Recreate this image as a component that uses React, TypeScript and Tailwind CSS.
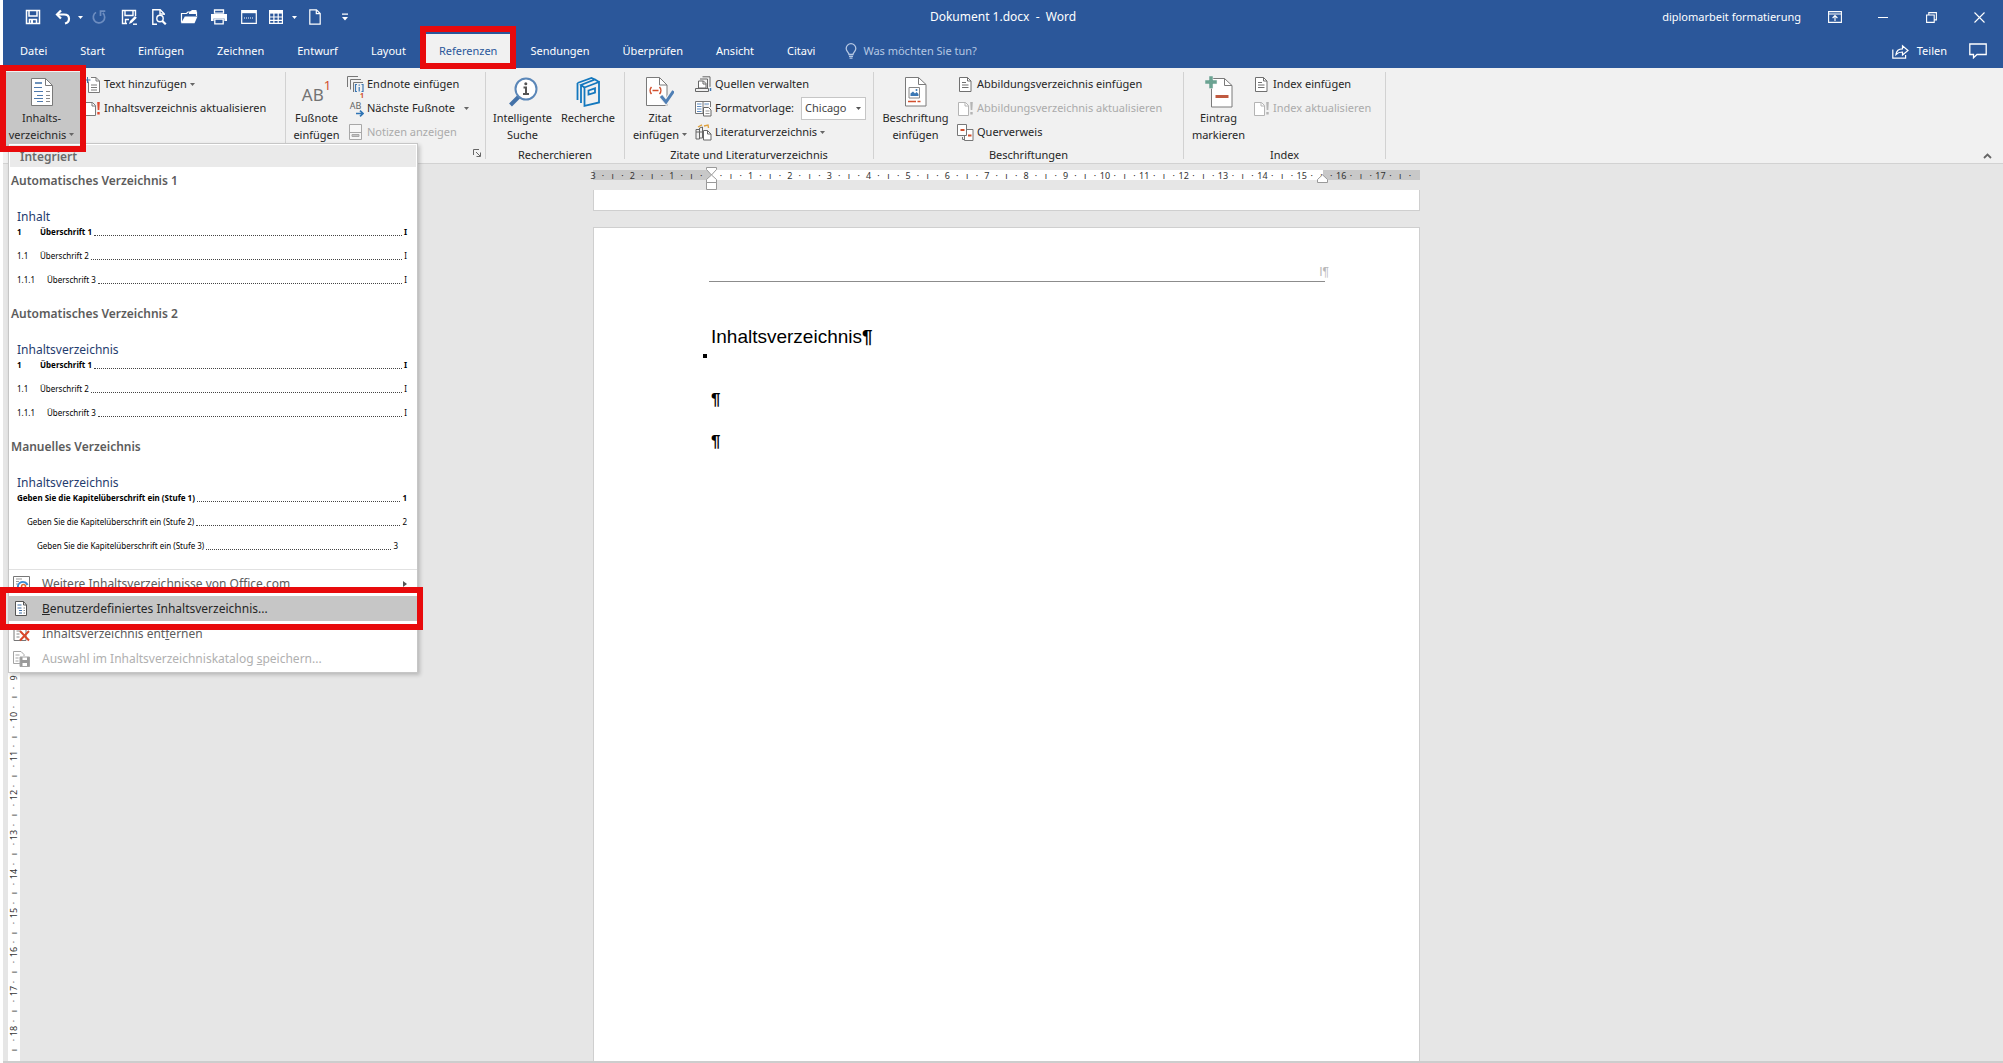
import { ReactNode } from "react";
import clsx from "clsx";

type IconProps = { className?: string };

/* ---------- title bar icons ---------- */

const SaveIcon = ({ className = "size-4" }: IconProps) => (
  <svg viewBox="0 0 16 16" className={className} fill="none" stroke="currentColor" strokeWidth="1.5">
    <path d="M1.5 1.5h13v13h-13z" />
    <path d="M4 2v5h8V2" />
    <path d="M4.5 14v-3.5h7V14" />
    <path d="M6 11h2v3H6z" fill="currentColor" stroke="none" />
  </svg>
);

const UndoIcon = () => (
  <svg viewBox="0 0 16 16" className="size-4" fill="none" stroke="currentColor" strokeWidth="2.2">
    <path d="M6 1.5 2 5.5l4 4" />
    <path d="M2.5 5.5h6.5c3 0 5 1.6 5 4.2S12 14 10 14.5" />
  </svg>
);

const RedoIcon = () => (
  <svg viewBox="0 0 16 16" className="size-4" fill="none" stroke="currentColor" strokeWidth="1.7">
    <path d="M5 3.4A5.7 5.7 0 1 0 11.8 4" />
    <path d="M9.5 7V2.2h4.8" />
  </svg>
);

const SaveAsIcon = () => (
  <svg viewBox="0 0 16 16" className="size-4" fill="none" stroke="currentColor" strokeWidth="1.4">
    <path d="M6 14.5H1.5v-13h13V7" />
    <path d="M4 2v4.5h8V2" />
    <path d="M4.5 14v-3.5H8" />
    <path d="m8 15 1-3 5-5 1.8 1.8-5 5z" fill="currentColor" stroke="none" />
    <path d="M12 15.2h4" />
  </svg>
);

const PreviewIcon = () => (
  <svg viewBox="0 0 16 16" className="size-4" fill="none" stroke="currentColor" strokeWidth="1.4">
    <path d="M6 15.2H1.8V.8h7.4l4 4V6" />
    <path d="M9 1v4h4" />
    <circle cx="9" cy="9.5" r="3.2" />
    <path d="m11.3 12 3.5 3.3" strokeWidth="2.2" />
  </svg>
);

const OpenIcon = () => (
  <svg viewBox="0 0 18 16" className="h-4 w-[18px]" fill="currentColor">
    <path d="M1.500 13.500v-9h5L8 3h8.500v4" fill="none" stroke="currentColor" strokeWidth="1.200" />
    <path d="M9 3.500 12 1h4.500v4H9z" />
    <path d="M1 14.200 4.800 7.500H17.500l-3 6.700z" />
  </svg>
);

const PrintIcon = () => (
  <svg viewBox="0 0 18 16" className="h-4 w-[18px]" fill="currentColor">
    <path d="M4.5 1h9v3.2h-9z" fill="none" stroke="currentColor" strokeWidth="1.3" />
    <path d="M1 5h16v7h-2.6V9.5H3.6V12H1z" />
    <path d="M4.8 10.2h8.4v4.6H4.8z" fill="none" stroke="currentColor" strokeWidth="1.3" />
  </svg>
);

const BreakIcon = () => (
  <svg viewBox="0 0 16 14" className="h-3.5 w-4" fill="none" stroke="currentColor">
    <path d="M.7.7h14.6v12.6H.7z" strokeWidth="1.2" />
    <path d="M1 2h14" strokeWidth="2.4" />
    <path d="M3 8h10" strokeDasharray="1 1" strokeWidth="1.2" />
  </svg>
);

const TableIcon = () => (
  <svg viewBox="0 0 14 14" className="size-3.5" fill="none" stroke="currentColor" strokeWidth="1.2">
    <path d="M.6.6h12.8v12.8H.6zM.6 7h12.8M.6 10.3h12.8M4.9 3v10.5M9.2 3v10.5" />
    <path d="M.6 2.1h12.8" strokeWidth="3" />
  </svg>
);

const BlankPageIcon = () => (
  <svg viewBox="0 0 12 16" className="h-4 w-3" fill="none" stroke="currentColor" strokeWidth="1.2">
    <path d="M.8.8h6.7l3.7 3.7v10.7H.8z" />
    <path d="M7.3 1v3.7H11" />
  </svg>
);

const Caret = ({ className = "" }: IconProps) => (
  <svg viewBox="0 0 5 3" className={clsx("inline-block h-[3px] w-[5px] shrink-0", className)} fill="currentColor">
    <path d="M0 0h5L2.5 3z" />
  </svg>
);

const CustomizeIcon = () => (
  <svg viewBox="0 0 6 8" className="h-2 w-1.5" fill="currentColor">
    <path d="M0 .5h6v1.2H0zM0 4h6L3 7.5z" />
  </svg>
);

const RibbonModeIcon = () => (
  <svg viewBox="0 0 14 12" className="h-3 w-3.5" fill="none" stroke="currentColor" strokeWidth="1.1">
    <path d="M.6.6h12.8v10.8H.6zM.6 3h12.8M7 10V4.8M4.6 7 7 4.6 9.4 7" />
  </svg>
);

const MinimizeIcon = () => (
  <svg viewBox="0 0 10 10" className="size-2.5" stroke="currentColor">
    <path d="M0 5.5h10" />
  </svg>
);

const RestoreIcon = () => (
  <svg viewBox="0 0 11 11" className="size-[11px]" fill="none" stroke="currentColor" strokeWidth="1.1">
    <path d="M.6 3h7.6v7.4H.6zM2.8 3V.6h7.6v7.3H8.2" />
  </svg>
);

const CloseIcon = () => (
  <svg viewBox="0 0 11 11" className="size-[11px]" stroke="currentColor" strokeWidth="1.1">
    <path d="m.5.5 10 10M10.5.5l-10 10" />
  </svg>
);

const BulbIcon = () => (
  <svg viewBox="0 0 12 16" className="h-4 w-3" fill="none" stroke="currentColor" strokeWidth="1.3">
    <path d="M4 11.5c0-2-2.8-3-2.8-6a4.8 4.8 0 0 1 9.6 0c0 3-2.8 4-2.8 6z" />
    <path d="M4 13.3h4M4.5 15.2h3" />
  </svg>
);

const ShareIcon = () => (
  <svg viewBox="0 0 17 15" className="h-[15px] w-[17px]" fill="none" stroke="currentColor" strokeWidth="1.2">
    <path d="M.8 5.5v8.7h12.8V11" />
    <path d="M4 10.5c.4-3.6 2.6-5.5 6.5-5.6V1.8l5.5 4.7-5.5 4.5V8C7.6 8 5.6 8.8 4 10.5z" />
  </svg>
);

const CommentIcon = () => (
  <svg viewBox="0 0 18 16" className="h-4 w-[18px]" fill="none" stroke="currentColor" strokeWidth="1.3">
    <path d="M.8 1h16.4v10.5H8l-3.5 3.3v-3.3H.8z" />
  </svg>
);

/* ---------- ribbon icons ---------- */

const TocIcon = () => (
  <svg viewBox="0 0 22 28" className="h-7 w-[22px]" fill="none">
    <path d="M.5.5h14l7 7v20H.5z" fill="#fff" stroke="#7a7a7a" />
    <path d="M14.5.5v7h7" stroke="#7a7a7a" />
    <path d="M4 5h7" stroke="#3c6ea5" strokeWidth="1.5" />
    <path d="M3 9.5h8M3 13.5h9M6 17.5h6M3 20.5h9M6 23.5h6" stroke="#4d79ad" />
    <path d="M15 13.5h4M15 17.5h4M15 20.5h4M15 23.5h4" stroke="#888" />
  </svg>
);

const AddTextIcon = () => (
  <svg viewBox="0 0 17 17" className="size-[17px]" fill="none" stroke="#7a7a7a">
    <path d="M4.5 5.5v11h11V5l-3.5-3.5H7" fill="#fff" />
    <path d="M12 1.5V5h3.5M7 9h6M7 11.500h6M7 14h6" />
    <path d="M.5 4h6M3.5 1v6" stroke="#3c6ea5" />
  </svg>
);

const UpdateIcon = ({ color = "#e0492f", stroke = "#7a7a7a" }: { color?: string; stroke?: string }) => (
  <svg viewBox="0 0 17 17" className="size-[17px]" fill="none">
    <path d="M1.5 2.5h7l3 3v10h-10z" fill="#fff" stroke={stroke} />
    <path d="M8 2.5V6h3.5" stroke={stroke} />
    <path d="M13.200 2h2.600l-.5 8h-1.600zM13.300 12h2.400v2.500h-2.400z" fill={color} />
  </svg>
);

const EndnoteIcon = () => (
  <svg viewBox="0 0 17 17" className="size-[17px]" fill="none" stroke="#777">
    <path d="M.5 11V.5H11M3.5 13.5v-10H14M6.5 16V6.5H16" />
    <path d="M10 8.5H8.5v7H10M14.5 8.5H16v7h-1.5M12.200 8.5v1.200M12.200 11v4.5" stroke="#3c78b4" strokeWidth="1.2" />
  </svg>
);

const NextNoteIcon = () => (
  <span aria-hidden="true" className="relative block h-[17px] w-[17px] text-[9px] leading-3 text-[#666]">
    AB
    <sup className="absolute -top-1 right-0 text-[7px] font-bold text-[#d2502e]">1</sup>
    <svg viewBox="0 0 8 7" className="absolute right-0 bottom-0 h-[7px] w-2" fill="none" stroke="#2f74b5" strokeWidth="1.6">
      <path d="M0 3.5h7M4 .6l3 2.900-3 2.900" />
    </svg>
  </span>
);

const NotesIcon = () => (
  <svg viewBox="0 0 17 17" className="size-[17px]" fill="none" stroke="#a8a8a8">
    <path d="M2.5.5h12v15h-12zM2.5 8.5h12" fill="#f7f7f7" />
    <path d="M5 10.5h7v2H5z" fill="#c4c4c4" />
  </svg>
);

const SmartLookupIcon = () => (
  <svg viewBox="0 0 30 30" className="size-[30px]" fill="none">
    <path d="M11 19.5 2.500 28" stroke="#4472a8" strokeWidth="4" />
    <circle cx="18" cy="12" r="10.5" fill="#fff" stroke="#5b87b8" strokeWidth="2" />
    <path d="M15.500 10.500H18v6.500M15 17h6" stroke="#555" strokeWidth="2" />
    <circle cx="17.800" cy="6.800" r="1.500" fill="#555" />
  </svg>
);

const ResearchIcon = () => (
  <svg viewBox="0 0 24 30" className="h-[30px] w-6" fill="none" stroke="#1478be" strokeWidth="1.8">
    <path d="M8.500 10.500 23 5v20.500l-14.500 3.300zM12.500 13.500l6.500-2.200v4.200l-6.500 2z" />
    <path d="M8.500 10.500 5 8l14-5.500L23 5M5 8v18M1.500 6v17M1.500 6l14-5 3.500 1.500" />
  </svg>
);

const CitationIcon = () => (
  <svg viewBox="0 0 28 30" className="h-[30px] w-7" fill="none">
    <path d="M.5.5h13l7.5 7.5v20.5H.5z" fill="#fff" stroke="#7a7a7a" />
    <path d="M13.5.5V8H21" stroke="#7a7a7a" />
    <path d="M5.5 10c-1.800 2-1.800 5 0 7M13.5 10c1.800 2 1.800 5 0 7M6.5 13.500h6" stroke="#d2502e" strokeWidth="1.5" />
    <path d="m15 19 5 6 7.500-11" stroke="#f1f1f1" strokeWidth="5" />
    <path d="m15 19 5 6 7.500-11" stroke="#4f7fb5" strokeWidth="3" />
  </svg>
);

const SourcesIcon = () => (
  <svg viewBox="0 0 17 17" className="size-[17px]" fill="none" stroke="#666">
    <path d="M5 3h7.500v9M7.500.8H15v10" />
    <path d="M3.500 12V5h5l2.500 2.500V12z" fill="#fff" />
    <path d="M8 5v3h3M.5 12.500h13v3H.5z" />
    <path d="M15.500 12v3" stroke="#3c78b4" strokeWidth="1.5" />
  </svg>
);

const StyleIcon = () => (
  <svg viewBox="0 0 17 17" className="size-[17px]" fill="none">
    <path d="M.5 1.5H8v12H.5zM8 1.5h7.5V7" stroke="#777" fill="#fff" />
    <path d="M2 4h4.5M2 6.500h4.5M2 9h4.5M2 11.500h4.5M9.500 4H14" stroke="#5e8bc0" />
    <path d="M8.500 7.500h5l2.500 2.500v6H8.500z" stroke="#666" fill="#fff" />
    <path d="M10.500 11h4M10.500 13.500h4" stroke="#999" />
  </svg>
);

const BibliographyIcon = () => (
  <svg viewBox="0 0 17 17" className="size-[17px]" fill="none">
    <path d="M1 5.500h3.500V15H1zM4.500 4l3-1v11h-3zM1 8h6" stroke="#666" />
    <path d="M3 3 7 .8M9 2l4-1 .5 3" stroke="#e0a13c" strokeWidth="1.4" />
    <path d="M8.500 6.500h4l3.500 3.500v6H8.500z" stroke="#666" fill="#fff" />
    <path d="M12.500 6.500V10H16" stroke="#666" />
  </svg>
);

const CaptionIcon = () => (
  <svg viewBox="0 0 22 30" className="h-[30px] w-[22px]" fill="none">
    <path d="M.5.5h13l7.500 7v21.500H.5z" fill="#fff" stroke="#7a7a7a" />
    <path d="M13.500.5v7H21" stroke="#7a7a7a" />
    <path d="M4 10.500h10.500V21H4z" stroke="#888" />
    <path d="M5.500 19v-2.500l2.500-2 2 2 1.500-1.500 2 2v2z" fill="#3c78b4" />
    <circle cx="11.500" cy="13" r="1" fill="#3c78b4" />
    <path d="M3 24.500h8M12.500 24.500h3" stroke="#d2502e" strokeWidth="1.3" />
  </svg>
);

const ListPageIcon = () => (
  <svg viewBox="0 0 17 17" className="size-[17px]" fill="none" stroke="#707070">
    <path d="M2.500 1.500h8l3.500 3.500v10.500H2.500z" fill="#fff" />
    <path d="M10.500 1.500V5H14M5 6.500h4M5 9h6.500M5 11.500h6.500" />
  </svg>
);

const CrossRefIcon = () => (
  <svg viewBox="0 0 17 17" className="size-[17px]" fill="none">
    <path d="M7.500 5.500H16v11H7.500z" fill="#fff" stroke="#777" />
    <path d="M.5.500h9v11h-9z" fill="#fff" stroke="#777" />
    <path d="M3.500 6h4M11 11.500h3.500" stroke="#d2502e" strokeWidth="2" />
    <path d="M5.500 13v2.500H8" stroke="#777" />
  </svg>
);

const MarkEntryIcon = () => (
  <svg viewBox="0 0 28 32" className="h-8 w-7" fill="none">
    <path d="M6.500 2.500h13l7.500 7V31H6.500z" fill="#fff" stroke="#7a7a7a" />
    <path d="M19.500 2.500v7H27" stroke="#7a7a7a" />
    <path d="M0 4h4V0h4v4h4v4H8v4.500H4V8H0z" fill="#6ba392" stroke="#f1f1f1" strokeWidth="0.5" />
    <path d="M10.500 20.500h13" stroke="#c05a40" strokeWidth="3" />
  </svg>
);

const LauncherIcon = () => (
  <svg viewBox="0 0 8 8" className="size-2" fill="none" stroke="#666">
    <path d="M.5 6V.5H6M3 3l4 4M7.5 3.500v4h-4" />
  </svg>
);

/* ---------- menu icons ---------- */

const OfficeComIcon = () => (
  <svg viewBox="0 0 17 17" className="size-[17px]" fill="none">
    <path d="M.5 1.500h16v14H.5z" fill="#fff" stroke="#777" />
    <path d="M3 4h6M3 6.500h3M3 9h2" stroke="#999" />
    <path d="M5 13a5 5 0 0 1 9.500-3" stroke="#3c8ad0" strokeWidth="2" />
    <circle cx="10.500" cy="11.500" r="2" stroke="#e0692f" strokeWidth="1.5" />
  </svg>
);

const CustomTocIcon = () => (
  <svg viewBox="0 0 17 17" className="size-[17px]" fill="none">
    <path d="M2.500 1.500h8l3 3.500v10.500h-11z" fill="#fff" stroke="#555" />
    <path d="M10.500 1.500V5h3" stroke="#555" />
    <path d="M4.500 5h4M4.500 8h4M6 10.500h3M6 13h3" stroke="#3c6ea5" />
    <path d="M10.500 8H12M10.500 10.500H12M10.500 13H12" stroke="#888" />
  </svg>
);

const RemoveTocIcon = () => (
  <svg viewBox="0 0 17 17" className="size-[17px]" fill="none">
    <path d="M1 1.500h9L13 5v10.500H1z" fill="#fff" stroke="#777" />
    <path d="M3.500 6h4M3.500 9h3M3.500 12h3" stroke="#888" />
    <path d="m7 6 9 9.500M16 6l-9 9.500" stroke="#d9482b" strokeWidth="2" />
  </svg>
);

const SaveSelectionIcon = () => (
  <svg viewBox="0 0 17 17" className="size-[17px]" fill="none" stroke="#a5a5a5">
    <path d="M7 13.500H.5v-12H8L11 4.500V6M2.500 5h4M2.500 8h3M2.500 11h3" />
    <path d="M7 7h9.500v9.500H7z" fill="#9a9a9a" />
    <path d="M9.500 7.500h4.500V10H9.500zM9.500 13h4.500v3H9.500z" fill="#fff" stroke="none" />
  </svg>
);

/* ---------- data ---------- */

const tabs = ["Datei", "Start", "Einfügen", "Zeichnen", "Entwurf", "Layout", "Referenzen", "Sendungen", "Überprüfen", "Ansicht", "Citavi"];

const quickButton = "flex h-[34px] w-[30px] items-center justify-center";

const previews = [
  {
    title: "Automatisches Verzeichnis 1",
    heading: "Inhalt",
    rows: [
      { num: "1", text: "Überschrift 1", page: "I" },
      { num: "1.1", text: "Überschrift 2", page: "I" },
      { num: "1.1.1", text: "Überschrift 3", page: "I" },
    ],
  },
  {
    title: "Automatisches Verzeichnis 2",
    heading: "Inhaltsverzeichnis",
    rows: [
      { num: "1", text: "Überschrift 1", page: "I" },
      { num: "1.1", text: "Überschrift 2", page: "I" },
      { num: "1.1.1", text: "Überschrift 3", page: "I" },
    ],
  },
  {
    title: "Manuelles Verzeichnis",
    heading: "Inhaltsverzeichnis",
    rows: [
      { num: "", text: "Geben Sie die Kapitelüberschrift ein (Stufe 1)", page: "1" },
      { num: "", text: "Geben Sie die Kapitelüberschrift ein (Stufe 2)", page: "2" },
      { num: "", text: "Geben Sie die Kapitelüberschrift ein (Stufe 3)", page: "3" },
    ],
  },
];

// four ticks per centimetre: number, dot, half mark, dot
const buildTicks = (from: number, count: number) =>
  Array.from({ length: count }, (_, i) => {
    if (i % 4 === 2) return "ı";
    if (i % 4 !== 0) return "·";
    const cm = Math.abs(from + i / 4);
    return cm === 0 ? "" : String(cm);
  });

const horizontalTicks = buildTicks(-3, 84);
const verticalTicks = buildTicks(9, 39);

/* ---------- building blocks ---------- */

const RedFrame = ({ className }: { className: string }) => (
  <span className={clsx("pointer-events-none absolute z-30 border-[6px] border-[#e80a0c]", className)} />
);

type LargeProps = { icon: ReactNode; lines: string[]; caret?: boolean; className?: string; active?: boolean };

const LargeButton = ({ icon, lines, caret, className, active }: LargeProps) => (
  <button className={clsx("flex h-[76px] shrink-0 flex-col items-center pt-0.5 whitespace-nowrap", active && "bg-[#c6c6c6]", className)}>
    <span className="flex h-[35px] items-center justify-center">{icon}</span>
    {lines.map((line, i) => (
      <span key={line} className="flex items-center gap-[3px] leading-[17px]">
        {line}
        {caret && i === lines.length - 1 && <Caret className="text-[#666]" />}
      </span>
    ))}
  </button>
);

type SmallProps = { icon: ReactNode; text: string; caret?: boolean; wideCaret?: boolean; disabled?: boolean };

const SmallButton = ({ icon, text, caret, wideCaret, disabled }: SmallProps) => (
  <button
    disabled={disabled}
    className={clsx("flex h-6 items-center gap-[3px] whitespace-nowrap", disabled && "text-[#ababab]")}
  >
    {icon}
    {text}
    {caret && <Caret className={clsx("text-[#666]", wideCaret && "ml-1.5")} />}
  </button>
);

type GroupProps = { label: string; className: string; children: ReactNode };

const Group = ({ label, className, children }: GroupProps) => (
  <section className={clsx("relative my-1 flex shrink-0 flex-col border-r border-[#d2d2d2]", className)}>
    <div className="flex">{children}</div>
    <h2 className="text-center leading-[14px]">{label}</h2>
  </section>
);

const TitleBar = () => (
  <div className="grid h-[34px] grid-cols-[1fr_auto_1fr] items-center">
    <div className="flex items-center pl-[15px]">
      <button aria-label="Speichern" className={quickButton}><SaveIcon /></button>
      <button aria-label="Rückgängig" className={quickButton}><UndoIcon /></button>
      <button aria-label="Rückgängig-Liste" className="flex w-1.5"><Caret /></button>
      <button aria-label="Wiederholen" className={clsx(quickButton, "text-[#6d8dc0]")}><RedoIcon /></button>
      <button aria-label="Speichern unter" className={quickButton}><SaveAsIcon /></button>
      <button aria-label="Seitenansicht" className={quickButton}><PreviewIcon /></button>
      <button aria-label="Öffnen" className={quickButton}><OpenIcon /></button>
      <button aria-label="Drucken" className={quickButton}><PrintIcon /></button>
      <button aria-label="Umbruch" className={quickButton}><BreakIcon /></button>
      <button aria-label="Tabelle" className="flex w-6 items-center justify-center"><TableIcon /></button>
      <button aria-label="Tabellen-Liste" className="flex w-3 justify-center"><Caret /></button>
      <button aria-label="Neu" className={quickButton}><BlankPageIcon /></button>
      <button aria-label="Anpassen" className={quickButton}><CustomizeIcon /></button>
    </div>
    <h1 className="text-[12px] whitespace-pre">Dokument 1.docx  -  Word</h1>
    <div className="flex items-center justify-end">
      <span className="mr-2.5">diplomarbeit formatierung</span>
      <button aria-label="Menüband-Anzeige" className="flex h-8 w-12 items-center justify-center"><RibbonModeIcon /></button>
      <button aria-label="Minimieren" className="flex h-8 w-12 items-center justify-center"><MinimizeIcon /></button>
      <button aria-label="Verkleinern" className="flex h-8 w-12 items-center justify-center"><RestoreIcon /></button>
      <button aria-label="Schließen" className="flex h-8 w-12 items-center justify-center"><CloseIcon /></button>
    </div>
  </div>
);

const TabBar = () => (
  <nav className="flex h-[34px] items-center gap-[3px] pl-0.5">
    {tabs.map((tab) => {
      const active = tab === "Referenzen";
      return (
        <button
          key={tab}
          className={clsx("relative h-full px-[15px]", active && "bg-[#f1f1f1] text-[#2b579a]")}
        >
          {tab}
          {active && <RedFrame className="-inset-x-1 -top-2 -bottom-px" />}
        </button>
      );
    })}
    <label className="ml-3 flex items-center gap-1.5 text-[#b5c7e3]">
      <BulbIcon />
      <input
        aria-label="Was möchten Sie tun?"
        placeholder="Was möchten Sie tun?"
        className="w-40 bg-transparent outline-none placeholder:text-[#b5c7e3]"
      />
    </label>
    <div className="ml-auto flex items-center pr-4">
      <button className="mr-[22px] flex items-center gap-2"><ShareIcon />Teilen</button>
      <button aria-label="Kommentare"><CommentIcon /></button>
    </div>
  </nav>
);

type Preview = (typeof previews)[number];

const TocPreview = ({ title, heading, rows }: Preview) => (
  <button className="block h-[133px] w-full text-left">
    <span className="block pt-0.5 pl-0.5 text-[12px] leading-[18px] font-semibold text-[#5c5c5c]">{title}</span>
    <span className="block pt-[18px] pl-2 text-[12px] leading-[18px] text-[#1f3c6e]">{heading}</span>
    {rows.map(({ num, text, page }, i) => (
      <span
        key={text}
        className={clsx(
          "flex h-6 items-start pr-2.5 text-[8px] leading-3 text-black",
          i === 0 && "font-bold",
          !num && i === 1 ? "pl-[18px]" : !num && i === 2 ? "pr-[19px] pl-7" : "pl-2",
        )}
      >
        {num && <span className={i === 2 ? "w-[30px]" : "w-[23px]"}>{num}</span>}
        {text}
        <span className="mx-0.5 mt-[9px] flex-1 border-b border-dotted border-[#444]" />
        {page}
      </span>
    ))}
  </button>
);

const menuItem = "flex h-[25px] w-full items-center gap-3 pl-1 text-left text-[12px] whitespace-nowrap";

const TocMenu = () => (
  <div className="absolute top-[75px] left-[5px] z-20 w-[410px] border border-[#c6c6c6] bg-white pb-px shadow-[2px_2px_4px_rgba(0,0,0,0.2)]">
    <h3 className="m-px mb-0 h-[22px] bg-[#eaeaea] pl-2.5 text-[12px] leading-6 font-semibold text-[#6a6a6a]">Integriert</h3>
    {previews.map((preview) => (
      <TocPreview key={preview.title} {...preview} />
    ))}
    <div className="mt-[3px] border-t border-[#e1e1e1] pt-px text-[#5c5c5c]">
      <button className={clsx(menuItem, "pr-2.5")}>
        <OfficeComIcon />
        <span className="flex-1">Weitere Inhaltsverzeichnisse von Office.com</span>
        <svg viewBox="0 0 4 6" className="h-1.5 w-1" fill="#555"><path d="M0 0v6l4-3z" /></svg>
      </button>
      <div className="relative">
        <button className={clsx(menuItem, "bg-[#c6c6c6] text-[#262626]")}>
          <CustomTocIcon />
          <span><u>B</u>enutzerdefiniertes Inhaltsverzeichnis...</span>
        </button>
        <RedFrame className="-inset-y-[9px] -right-1.5 -left-[9px]" />
      </div>
      <button className={menuItem}>
        <RemoveTocIcon />
        <span>Inhaltsverzeichnis ent<u>f</u>ernen</span>
      </button>
      <button disabled className={clsx(menuItem, "text-[#b0b0b0]")}>
        <SaveSelectionIcon />
        <span>Auswahl im Inhaltsverzeichniskatalog <u>s</u>peichern...</span>
      </button>
    </div>
  </div>
);

const Ribbon = () => (
  <div className="relative z-10 flex h-24 border-b border-[#d2d2d2] bg-[#f1f1f1] text-[#262626]">
    <Group label="" className="w-[283px]">
      <div className="relative">
        <LargeButton active caret icon={<TocIcon />} lines={["Inhalts-", "verzeichnis"]} className="w-[77px]" />
        <RedFrame className="-top-[7px] -right-1.5 -bottom-1 -left-[3px]" />
      </div>
      <div className="ml-1">
        <SmallButton icon={<AddTextIcon />} text="Text hinzufügen" caret />
        <SmallButton icon={<UpdateIcon />} text="Inhaltsverzeichnis aktualisieren" />
      </div>
    </Group>
    <Group label="" className="w-[200px]">
      <LargeButton
        icon={
          <span aria-hidden="true" className="flex items-start pt-1.5 text-[17px] leading-5 text-[#737373]">
            AB<span className="-mt-2 text-[13px] leading-4 text-[#d2502e]">1</span>
          </span>
        }
        lines={["Fußnote", "einfügen"]}
        className="w-[61px]"
      />
      <div>
        <SmallButton icon={<EndnoteIcon />} text="Endnote einfügen" />
        <SmallButton icon={<NextNoteIcon />} text="Nächste Fußnote" caret wideCaret />
        <SmallButton disabled icon={<NotesIcon />} text="Notizen anzeigen" />
      </div>
      <button aria-label="Fußnotenoptionen" className="absolute right-1 bottom-0.5"><LauncherIcon /></button>
    </Group>
    <Group label="Recherchieren" className="w-[139px]">
      <LargeButton icon={<SmartLookupIcon />} lines={["Intelligente", "Suche"]} className="w-[73px]" />
      <LargeButton icon={<ResearchIcon />} lines={["Recherche"]} className="w-[58px]" />
    </Group>
    <Group label="Zitate und Literaturverzeichnis" className="w-[249px]">
      <LargeButton caret icon={<CitationIcon />} lines={["Zitat", "einfügen"]} className="w-[70px]" />
      <div>
        <SmallButton icon={<SourcesIcon />} text="Quellen verwalten" />
        <div className="flex h-6 items-center gap-[3px]">
          <StyleIcon />
          <label htmlFor="style">Formatvorlage:</label>
          <span className="relative ml-1 flex items-center">
            <select
              id="style"
              className="h-[23px] w-[65px] appearance-none border border-[#c6c6c6] bg-white pl-[3px] text-[#444]"
            >
              <option>Chicago</option>
            </select>
            <Caret className="pointer-events-none absolute right-[5px] text-[#555]" />
          </span>
        </div>
        <SmallButton caret icon={<BibliographyIcon />} text="Literaturverzeichnis" />
      </div>
    </Group>
    <Group label="Beschriftungen" className="w-[310px]">
      <LargeButton icon={<CaptionIcon />} lines={["Beschriftung", "einfügen"]} className="w-[83px]" />
      <div>
        <SmallButton icon={<ListPageIcon />} text="Abbildungsverzeichnis einfügen" />
        <SmallButton disabled icon={<UpdateIcon color="#b4b4b4" stroke="#b4b4b4" />} text="Abbildungsverzeichnis aktualisieren" />
        <SmallButton icon={<CrossRefIcon />} text="Querverweis" />
      </div>
    </Group>
    <Group label="Index" className="w-[202px]">
      <LargeButton icon={<MarkEntryIcon />} lines={["Eintrag", "markieren"]} className="w-[69px]" />
      <div>
        <SmallButton icon={<ListPageIcon />} text="Index einfügen" />
        <SmallButton disabled icon={<UpdateIcon color="#b4b4b4" stroke="#b4b4b4" />} text="Index aktualisieren" />
      </div>
    </Group>
    <button aria-label="Menüband reduzieren" className="mt-auto mr-[11px] mb-1 ml-auto">
      <svg viewBox="0 0 9 6" className="h-1.5 w-[9px]" fill="none" stroke="#666" strokeWidth="1.8">
        <path d="m1 5 3.500-3.500L8 5" />
      </svg>
    </button>
    <TocMenu />
  </div>
);

const HorizontalRuler = () => (
  <div className="relative flex h-2.5 bg-white text-[9px] leading-3 text-[#333]">
    <div className="absolute inset-y-0 left-0 w-[119px] bg-[#c8c8c8]" />
    <div className="absolute inset-y-0 right-0 w-[97px] bg-[#c8c8c8]" />
    {horizontalTicks.map((tick, i) => (
      <span key={i} className="relative flex-1">
        <span className="flex w-0 justify-center">{tick}</span>
      </span>
    ))}
    <svg viewBox="0 0 11 23" className="absolute -top-[3px] left-[113px] h-[23px] w-[11px]" fill="#fff" stroke="#999">
      <path d="M.5.500h10v2L5.500 8l-5-5.500zM.5 15.500v-3L5.500 8l5 4.500v3zM.5 15.500h10v7H.5z" />
    </svg>
    <svg viewBox="0 0 11 9" className="absolute top-1 right-[92px] h-[9px] w-[11px]" fill="#fff" stroke="#999">
      <path d="M.5 8.500V5.500L5.500.8l5 4.700v3z" />
    </svg>
  </div>
);

// begins right below the open menu
const VerticalRuler = () => (
  <div className="mt-[509px] flex w-3 flex-1 flex-col bg-white pb-1.5 text-[9px] leading-3 text-[#333]">
    {verticalTicks.map((tick, i) => (
      <span key={i} className="flex min-h-0 flex-1 items-center justify-center">
        <span className="flex h-0 w-3 -rotate-90 items-center justify-center">{tick}</span>
      </span>
    ))}
  </div>
);

const Page = () => (
  <article className="mt-4 flex-1 border border-b-0 border-[#cfcfcf] bg-white pr-[94px] pl-[115px] font-['Liberation_Sans',Arial,sans-serif] text-black">
    <header className="mt-9 flex h-[18px] items-end justify-end border-b border-[#8c8c8c] text-[12px] leading-[18px] text-[#b8b8b8]">
      <span className="-mr-1">I¶</span>
    </header>
    <h2 className="mt-8 pl-0.5 text-[19px] leading-[46px]">Inhaltsverzeichnis<b>¶</b></h2>
    <div className="-mt-1.5 -ml-1.5 size-1 bg-black" />
    <p className="mt-[21px] pl-0.5 text-[17px] leading-[42px] font-bold">¶</p>
    <p className="pl-0.5 text-[17px] leading-[42px] font-bold">¶</p>
  </article>
);

const App = () => (
  <div className="flex h-screen flex-col overflow-hidden bg-white pl-[3px] font-['Noto_Sans','Segoe_UI',sans-serif] text-[11px]">
    <header className="bg-[#2b579a] text-white">
      <TitleBar />
      <TabBar />
    </header>
    <Ribbon />
    <main className="flex min-h-0 flex-1 border-b-2 border-[#cdcdcd] bg-[#e6e6e6]">
      <div className="flex w-[17px] flex-col pl-[5px]">
        <VerticalRuler />
      </div>
      <div className="flex min-w-0 flex-1 justify-center pr-2.5">
        <div className="flex w-[827px] flex-col pt-1.5">
          <HorizontalRuler />
          <div className="mt-2.5 h-[21px] border-x border-b border-[#cfcfcf] bg-white" />
          <Page />
        </div>
      </div>
    </main>
  </div>
);

export default App;
